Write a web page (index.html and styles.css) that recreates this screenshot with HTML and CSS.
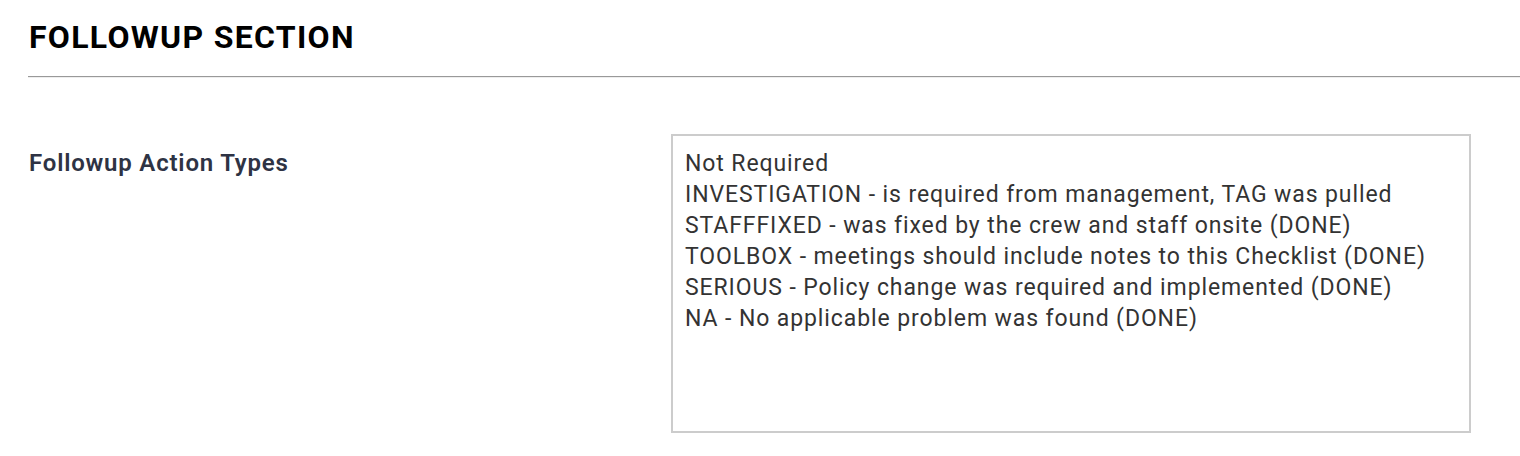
FILE: index.html
```html
<!DOCTYPE html>
<html lang="en">
<head>
    <meta charset="UTF-8">
    <meta name="viewport" content="width=device-width, initial-scale=1.0">
    <title>Followup Section</title>
    <link rel="stylesheet" href="styles.css">
</head>
<body>
    <div class="section">
        <h1 class="section-title">FOLLOWUP SECTION</h1>
        <hr class="section-rule">

        <div class="field-row">
            <label class="field-label" for="followupTypes">Followup Action Types</label>
            <div class="field-box" id="followupTypes">Not Required
INVESTIGATION - is required from management, TAG was pulled
STAFFFIXED - was fixed by the crew and staff onsite (DONE)
TOOLBOX - meetings should include notes to this Checklist (DONE)
SERIOUS - Policy change was required and implemented (DONE)
NA - No applicable problem was found (DONE)</div>
        </div>
    </div>
</body>
</html>
```

FILE: styles.css
```css
body {
    margin: 0;
    background: #fff;
    font-family: Roboto, 'Liberation Sans', sans-serif;
    color: #333;
}

.section {
    padding: 18px 0 0 28px;
}

.section-title {
    margin: 0 0 20px 1px;
    font-size: 32px;
    line-height: 38px;
    font-weight: 700;
    letter-spacing: 1.3px;
    color: #000;
}

.section-rule {
    margin: 0;
    border: none;
    border-top: 1px solid #999;
    border-bottom: 1px solid #eee;
}

.field-row {
    display: grid;
    grid-template-columns: 643px 800px;
    margin-top: 56px;
}

.field-label {
    padding: 14px 0 0 1px;
    font-size: 24px;
    line-height: 31px;
    font-weight: 600;
    letter-spacing: 0.8px;
    color: #2e3344;
}

.field-box {
    height: 299px;
    box-sizing: border-box;
    padding: 12px 12px;
    border: 2px solid #ccc;
    white-space: pre-line;
    font-size: 23px;
    line-height: 31px;
    letter-spacing: 0.9px;
    color: #333;
}
```
